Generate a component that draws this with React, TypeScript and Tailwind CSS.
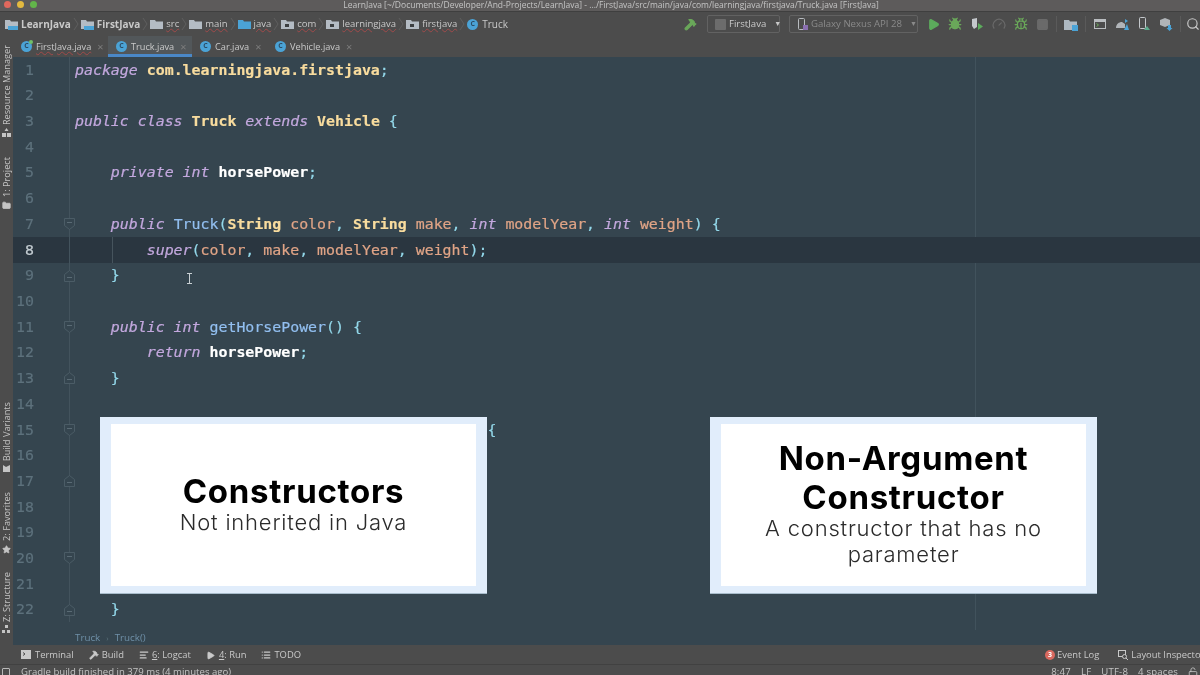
import { Bug, Hammer, Play, Search, Star, Square, Gauge, LockOpen, List, AlignLeft, Folder } from 'lucide-react';

type Token = [string, string];

const kw = 'italic text-[#c3a8de]';
const cls = 'font-bold text-[#f8dc9e]';
const param = 'text-[#e0a486]';
const punc = 'text-[#93d8ea]';
const field = 'font-bold text-white';
const fn = 'text-[#92bff0]';

const code: Token[][] = [
  [['package', kw], [' ', ''], ['com.learningjava.firstjava', cls], [';', punc]],
  [],
  [['public class', kw], [' ', ''], ['Truck', cls], [' ', ''], ['extends', kw], [' ', ''], ['Vehicle', cls], [' {', punc]],
  [],
  [['    private int', kw], [' ', ''], ['horsePower', field], [';', punc]],
  [],
  [['    public', kw], [' ', ''], ['Truck', fn], ['(', punc], ['String', cls], [' ', ''], ['color', param], [', ', punc], ['String', cls], [' ', ''], ['make', param], [', ', punc], ['int', kw], [' ', ''], ['modelYear', param], [', ', punc], ['int', kw], [' ', ''], ['weight', param], [') {', punc]],
  [['        super', kw], ['(', punc], ['color', param], [', ', punc], ['make', param], [', ', punc], ['modelYear', param], [', ', punc], ['weight', param], [');', punc]],
  [['    }', punc]],
  [],
  [['    public int', kw], [' ', ''], ['getHorsePower', fn], ['() {', punc]],
  [['        return', kw], [' ', ''], ['horsePower', field], [';', punc]],
  [['    }', punc]],
  [],
  [['                                              {', punc]],
  [],
  [],
  [],
  [],
  [],
  [],
  [['    }', punc]],
];

const foldOpen = [7, 11, 15, 20];
const foldClose = [9, 13, 17, 22];

function FolderIcon({ color = '#b4bcc4', module = false, dot = false }: { color?: string; module?: boolean; dot?: boolean }) {
  return (
    <svg width="13" height="12" viewBox="0 0 13 12" className="shrink-0">
      <path d="M0 2h5l1 1.500h7V11H0z" fill={color} />
      {module && <rect x="3" y="8" width="10" height="4" fill="#4ba3d6" />}
      {dot && <rect x="4" y="6" width="4" height="3" fill="#3c3f41" />}
    </svg>
  );
}

function ClassIcon({ size = 11, dot }: { size?: number; dot?: boolean }) {
  return (
    <span style={{ width: size, height: size }} className="relative shrink-0 rounded-full bg-[#4ba3d6] flex items-center justify-center text-[7px] font-bold text-[#2c4d66]">
      C
      {dot && <span className="absolute -right-[1px] -top-[1px] w-[4px] h-[4px] rounded-full bg-[#6fbf6a]" />}
    </span>
  );
}

function Chevron() {
  return (
    <svg width="6" height="14" viewBox="0 0 6 14" className="ml-[2px] mr-[2px] shrink-0">
      <path d="M1 1l4 6-4 6" stroke="#5f5f5f" fill="none" />
    </svg>
  );
}

function Crumb({ label, children, bold, underline }: { label: string; children: React.ReactNode; bold?: boolean; underline?: boolean }) {
  return (
    <div className="flex items-center">
      <div className="flex items-center gap-[3px]">
        {children}
        <span className={`${bold ? 'font-bold text-[10px]' : 'text-[9.5px]'} ${underline ? 'underline decoration-[#a04a4a] decoration-wavy decoration-1' : ''}`}>{label}</span>
      </div>
      <Chevron />
    </div>
  );
}

function Tab({ label, active, underline, dot, width }: { label: string; active?: boolean; underline?: boolean; dot?: boolean; width: string }) {
  return (
    <div className={`${width} h-full flex items-center gap-[4px] pl-[8px] ${active ? 'bg-[#52575a] border-b-[3px] border-[#4a88c7] pt-[3px]' : ''}`}>
      <ClassIcon size={11} dot={dot} />
      <span className={underline ? 'underline decoration-[#a04a4a] decoration-wavy decoration-1' : ''}>{label}</span>
      <span className="text-[#7d7d7d] text-[11px] leading-none ml-[2px]">×</span>
    </div>
  );
}

function SideLabel({ label, className }: { label: string; className: string }) {
  return <div className={`[writing-mode:vertical-rl] rotate-180 whitespace-nowrap leading-[13px] ${className}`}>{label}</div>;
}

function Fold({ up }: { up?: boolean }) {
  return (
    <svg width="11" height="12" viewBox="0 0 11 12" className={`absolute right-[-6px] top-[7px] ${up ? 'rotate-180' : ''}`}>
      <path d="M.5.5h10v7l-5 4-5-4z" fill="#35454f" stroke="#4b5c66" />
      <path d="M3 4.500h5" stroke="#5a6b75" />
    </svg>
  );
}

function Card({ title, sub, className }: { title: string; sub: string; className: string }) {
  return (
    <div className={`absolute top-[417px] w-[387px] h-[177px] bg-[#e1edfb] border-b border-[#a8bccb] px-[11px] py-[7px] ${className}`}>
      <div className="h-full pb-[4px] bg-white flex flex-col items-center justify-center text-center font-['Inter',sans-serif] text-black">
        <div className="text-[33px] leading-[39px] font-bold tracking-[0.7px] w-[320px]">{title}</div>
        <div className="-mt-[2px] text-[22px] leading-[26px] font-light tracking-[0.8px] text-[#2b2b2b] w-[320px]">{sub}</div>
      </div>
    </div>
  );
}

export default function App() {
  return (
    <div className="relative w-[1200px] h-[675px] overflow-hidden flex flex-col bg-[#4c4c4c] text-[#c9c9c9] font-['Open_Sans',sans-serif] blur-[0.4px]">
      {/* Title bar */}
      <div className="relative h-[11px] shrink-0 bg-[#5d5b5b] flex items-center justify-center pl-[22px] text-[8.5px] text-[#c4c4c4] leading-none">
        <div className="absolute left-[4px] top-[1px] flex gap-[6px]">
          <span className="w-[7px] h-[7px] rounded-full bg-[#e0685d]" />
          <span className="w-[7px] h-[7px] rounded-full bg-[#e3b93f]" />
          <span className="w-[7px] h-[7px] rounded-full bg-[#62b54a]" />
        </div>
        LearnJava [~/Documents/Developer/And-Projects/LearnJava] - .../FirstJava/src/main/java/com/learningjava/firstjava/Truck.java [FirstJava]
      </div>

      {/* Nav bar */}
      <div className="h-[25px] shrink-0 flex items-center justify-between pl-[5px] text-[10px] border-t border-[#3f3f3f]">
        <div className="flex items-center">
          <Crumb label="LearnJava" bold><FolderIcon module /></Crumb>
          <Crumb label="FirstJava" bold><FolderIcon module /></Crumb>
          <Crumb label="src" underline><FolderIcon /></Crumb>
          <Crumb label="main" underline><FolderIcon /></Crumb>
          <Crumb label="java" underline><FolderIcon color="#4ba3d6" /></Crumb>
          <Crumb label="com" underline><FolderIcon dot /></Crumb>
          <Crumb label="learningjava" underline><FolderIcon dot /></Crumb>
          <Crumb label="firstjava" underline><FolderIcon dot /></Crumb>
          <div className="flex items-center gap-[4px]"><ClassIcon /><span>Truck</span></div>
        </div>
        <div className="flex items-center">
          <Hammer size={13} className="text-[#6aa85a] fill-[#6aa85a] mr-[10px]" />
          <div className="w-[73px] h-[18px] border border-[#626262] rounded-[2px] flex items-center pl-[7px] gap-[3px] mr-[9px] text-[9.6px]">
            <span className="w-[11px] h-[11px] shrink-0 bg-[#6c6c6c] rounded-[1px]" />
            <span className="font-medium">FirstJava</span>
            <span className="text-[7px] ml-[5px]">▼</span>
          </div>
          <div className="w-[129px] h-[18px] border border-[#626262] rounded-[2px] flex items-center pl-[7px] gap-[2px] mr-[9px] text-[9.6px] text-[#8a8a8a]">
            <svg width="12" height="13" viewBox="0 0 12 13" className="shrink-0">
              <rect x="1.500" y=".5" width="6" height="11" rx="1" fill="none" stroke="#b8bcc0" />
              <rect x="6" y="7" width="5" height="5" fill="#8a6fb0" />
            </svg>
            <span className="whitespace-nowrap">Galaxy Nexus API 28</span>
            <span className="text-[7px] ml-[6px]">▼</span>
          </div>
          <div className="flex items-center gap-[8px]">
            <Play size={13} className="text-[#5cab5c] fill-[#5cab5c]" />
            <Bug size={14} className="text-[#6aa85a] fill-[#6aa85a]" />
            <svg width="14" height="14" viewBox="0 0 14 14"><path d="M2 2l5-1v9l-3 2-2-3z" fill="#c4c8cc" /><path d="M8 6l5 3.500-5 3.500z" fill="#5cab5c" /></svg>
            <Gauge size={14} className="text-[#6a6a6a]" />
            <Bug size={14} className="text-[#6aa85a]" />
            <Square size={13} className="text-[#6a6a6a] fill-[#6a6a6a]" />
          </div>
          <div className="w-[1px] h-[16px] bg-[#5a5a5a] mx-[7px]" />
          <svg width="14" height="13" viewBox="0 0 14 13"><path d="M0 2h5l1 1.500h7V12H0z" fill="#aeb9c2" /><rect x="8" y="7" width="6" height="6" fill="#4ba3d6" /></svg>
          <div className="w-[1px] h-[16px] bg-[#5a5a5a] mx-[7px]" />
          <div className="flex items-center gap-[8px]">
            <svg width="14" height="14" viewBox="0 0 14 14"><rect x="1.500" y="2.500" width="11" height="9" fill="none" stroke="#b9bdc0" /><path d="M1 3h12v2H1z" fill="#b9bdc0" /><path d="M3.500 6.500l2 1.500-2 1.500" stroke="#6aa85a" fill="none" /></svg>
            <svg width="14" height="14" viewBox="0 0 14 14"><path d="M1 11c0-4 3-6 6-6l3 2v4H1z" fill="#b0b4b8" /><path d="M10 2l3 2-3 2z" fill="#4ba3d6" /><path d="M9 13l3-6 2 6z" fill="#4ba3d6" /></svg>
            <svg width="14" height="14" viewBox="0 0 14 14"><rect x="2.500" y=".5" width="6" height="11" rx="1" fill="none" stroke="#c4c8cc" /><path d="M7 13l3-4 3 4z" fill="#5cab8c" /></svg>
            <svg width="14" height="14" viewBox="0 0 14 14"><path d="M1 3l5-2 5 2v5l-5 2-5-2z" fill="#b0b4b8" /><path d="M9 8h3v3h1.500l-3 3-3-3H9z" fill="#4ba3d6" /></svg>
          </div>
          <div className="w-[1px] h-[16px] bg-[#5a5a5a] ml-[7px] mr-[5px]" />
          <Search size={14} className="text-[#c9c9c9]" />
        </div>
      </div>

      {/* Middle */}
      <div className="flex-1 flex min-h-0">
        <div className="w-[13px] shrink-0 flex flex-col items-center text-[9.2px] text-[#c4c4c4] bg-[#4c4c4c]">
          <SideLabel label="Resource Manager" className="mt-[9px]" />
          <svg width="9" height="9" viewBox="0 0 9 9" className="mt-[3px] shrink-0"><path d="M4.500 0l2 3h-4zM0 5h4v4H0zM5 5h4v4H5z" fill="#c4c4c4" /></svg>
          <SideLabel label="1: Project" className="mt-[20px]" />
          <Folder size={9} className="mt-[4px] shrink-0 fill-[#c4c4c4] text-[#c4c4c4]" />
          <SideLabel label="Build Variants" className="mt-[192px]" />
          <svg width="9" height="9" viewBox="0 0 9 9" className="mt-[3px] shrink-0"><path d="M1 1l3 2 4-2v7H1z" fill="#c4c4c4" /></svg>
          <SideLabel label="2: Favorites" className="mt-[19px]" />
          <Star size={9} className="mt-[4px] shrink-0 fill-[#c4c4c4] text-[#c4c4c4]" />
          <SideLabel label="Z: Structure" className="mt-[18px]" />
          <svg width="9" height="9" viewBox="0 0 9 9" className="mt-[3px] shrink-0"><path d="M3 0h3v3H3zM0 5h3v3H0zM5 5h3v3H5z" fill="#c4c4c4" /></svg>
        </div>

        <div className="flex-1 min-w-0 flex flex-col">
          {/* Tabs */}
          <div className="h-[21px] shrink-0 flex items-center text-[9.2px] font-medium">
            <Tab label="FirstJava.java" underline dot width="w-[95px]" />
            <Tab label="Truck.java" active width="w-[84px]" />
            <Tab label="Car.java" width="w-[75px]" />
            <Tab label="Vehicle.java" width="w-[92px]" />
          </div>

          {/* Editor */}
          <div className="relative flex-1 min-h-0 bg-[#35454f] font-['DejaVu_Sans_Mono',monospace] text-[14.9px] [-webkit-text-stroke:0.2px]">
            <div className="absolute left-[962px] top-0 bottom-0 w-[1px] bg-[#41525c]" />
            {code.map((line, i) => {
              const n = i + 1;
              const current = n === 8;
              return (
                <div key={n} className={`relative h-[25.71px] flex items-center whitespace-pre ${current ? 'bg-[#2a3640]' : ''}`}>
                  <div className={`w-[21px] text-right ${current ? 'text-[#c3ccd1]' : 'text-[#5d717c]'}`}>{n}</div>
                  <div className="relative h-full w-[36px] border-r border-[#43535d]">
                    {foldOpen.includes(n) && <Fold />}
                    {foldClose.includes(n) && <Fold up />}
                  </div>
                  <div className="pl-[5px]">
                    {line.map(([text, c], j) => <span key={j} className={c}>{text}</span>)}
                  </div>
                  {current && <div className="absolute left-[99px] top-0 bottom-0 w-[1px] bg-[#46545d]" />}
                </div>
              );
            })}
          </div>

          {/* Code breadcrumb */}
          <div className="h-[16px] shrink-0 -mt-[1px] pt-[1px] bg-[#35454f] border-t border-[#41525c] flex items-center pl-[62px] gap-[6px] text-[9.8px] text-[#6f90a8] font-['Open_Sans',sans-serif]">
            <span>Truck</span>
            <span className="text-[#5d717c] text-[8px]">›</span>
            <span>Truck()</span>
          </div>
        </div>
      </div>

      {/* Tool window bar */}
      <div className="h-[19px] shrink-0 pt-[2px] flex items-center justify-between pl-[21px] text-[9.4px] text-[#c9c9c9] whitespace-nowrap">
        <div className="flex items-center gap-[15px]">
          <div className="flex items-center gap-[4px]">
            <svg width="10" height="10" viewBox="0 0 10 10"><rect width="10" height="9" fill="#c9c9c9" /><path d="M2 2.500l2 1.500-2 1.500" stroke="#4c4c4c" fill="none" /></svg>
            <span>Terminal</span>
          </div>
          <div className="flex items-center gap-[3px]"><Hammer size={10} className="fill-[#c9c9c9]" /><span>Build</span></div>
          <div className="flex items-center gap-[3px]"><AlignLeft size={10} strokeWidth={3} /><span><u>6</u>: Logcat</span></div>
          <div className="flex items-center gap-[4px]"><Play size={9} className="fill-[#c9c9c9]" /><span><u>4</u>: Run</span></div>
          <div className="flex items-center gap-[3px]"><List size={10} strokeWidth={3} /><span>TODO</span></div>
        </div>
        <div className="flex items-center gap-[19px] w-[155px]">
          <div className="flex items-center gap-[2px]">
            <span className="w-[10px] h-[10px] rounded-full bg-[#d9695f] text-white text-[7px] font-bold flex items-center justify-center">3</span>
            <span>Event Log</span>
          </div>
          <div className="flex items-center gap-[3px]">
            <svg width="10" height="10" viewBox="0 0 10 10"><rect x=".5" y=".5" width="7" height="6" fill="none" stroke="#c9c9c9" /><circle cx="6.500" cy="6.500" r="2" fill="#4c4c4c" stroke="#c9c9c9" /><path d="M8 8l2 2" stroke="#c9c9c9" /></svg>
            <span>Layout Inspector</span>
          </div>
        </div>
      </div>

      {/* Status bar */}
      <div className="h-[11px] shrink-0 relative text-[9.6px] text-[#c4c4c4] whitespace-nowrap border-t border-[#414141]">
        <div className="flex items-start justify-between pl-[2px] pr-[2px] h-[16px]">
          <div className="flex items-center gap-[11px]">
            <span className="w-[8px] h-[8px] border border-[#b8b8b8] rounded-[1px]" />
            <span>Gradle build finished in 379 ms (4 minutes ago)</span>
          </div>
          <div className="flex items-center gap-[10px] tracking-[0.2px]">
            <span>8:47</span>
            <span>LF</span>
            <span>UTF-8</span>
            <span>4 spaces</span>
            <LockOpen size={10} />
          </div>
        </div>
      </div>

      {/* Slide overlays */}
      <Card title="Constructors" sub="Not inherited in Java" className="left-[100px]" />
      <Card title="Non-Argument Constructor" sub="A constructor that has no parameter" className="left-[710px]" />

      {/* Mouse cursor */}
      <svg width="7" height="11" viewBox="0 0 7 11" className="absolute left-[186px] top-[273px]">
        <path d="M1 .5h5M3.500.5v10M1 10.500h5" stroke="#c9d0d4" fill="none" />
      </svg>
    </div>
  );
}
